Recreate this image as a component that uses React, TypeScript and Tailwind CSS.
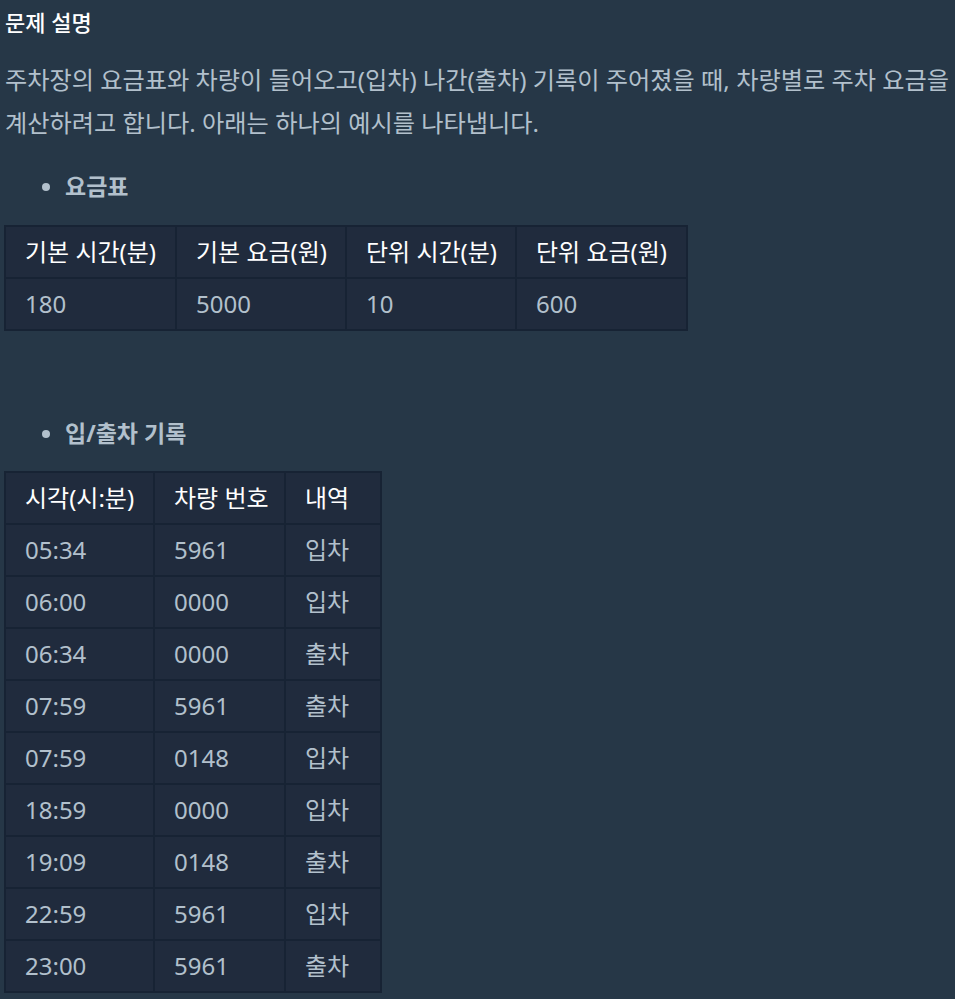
const feeHead = ['기본 시간(분)', '기본 요금(원)', '단위 시간(분)', '단위 요금(원)'];
const feeRow = ['180', '5000', '10', '600'];
const feeCols = ['w-[171px]', 'w-[170px]', 'w-[170px]', 'w-[171px]'];

const logHead = ['시각(시:분)', '차량 번호', '내역'];
const logCols = ['w-[149px]', 'w-[131px]', 'w-[96px]'];
const logRows = [
    ['05:34', '5961', '입차'],
    ['06:00', '0000', '입차'],
    ['06:34', '0000', '출차'],
    ['07:59', '5961', '출차'],
    ['07:59', '0148', '입차'],
    ['18:59', '0000', '입차'],
    ['19:09', '0148', '출차'],
    ['22:59', '5961', '입차'],
    ['23:00', '5961', '출차'],
];

const Table = ({
    head,
    rows,
    cols,
    width,
}: {
    head: string[];
    rows: string[][];
    cols: string[];
    width: string;
}) => {
    return (
        <table
            className={`ml-1 table-fixed border-collapse border-2 border-[#172334] bg-[#202b3d] text-[24px] ${width}`}
        >
            <thead>
                <tr>
                    {head.map((h, i) => (
                        <th
                            key={h}
                            className={`h-[52px] border-2 border-[#172334] px-[19px] py-0 text-left leading-[30px] font-normal whitespace-nowrap text-white ${cols[i]}`}
                        >
                            {h}
                        </th>
                    ))}
                </tr>
            </thead>
            <tbody>
                {rows.map((row, i) => (
                    <tr key={i}>
                        {row.map((c, j) => (
                            <td
                                key={j}
                                className="h-[52px] border-2 border-[#172334] px-[19px] py-0 leading-[30px] whitespace-nowrap text-[#b2c0cc]"
                            >
                                {c}
                            </td>
                        ))}
                    </tr>
                ))}
            </tbody>
        </table>
    );
};

const Bullet = ({ children }: { children: string }) => (
    <ul className="list-disc pl-[65px] text-[23px] leading-[32px] font-bold text-[#b2c0cc] marker:text-[#b2c0cc]">
        <li>{children}</li>
    </ul>
);

export default function App() {
    return (
        <div
            className="min-h-screen bg-[#263747] pb-2 text-[#b2c0cc]"
            style={{ fontFamily: '"Noto Sans", "Noto Sans CJK KR", sans-serif' }}
        >
            <h5 className="pl-[5px] text-[22px] leading-[44px] font-medium text-white">
                문제 설명
            </h5>
            <p className="mt-[14px] pl-[5px] text-[24.2px] leading-[43px]">
                주차장의 요금표와 차량이 들어오고(입차) 나간(출차) 기록이 주어졌을 때, 차량별로 주차 요금을
                계산하려고 합니다. 아래는 하나의 예시를 나타냅니다.
            </p>
            <div className="mt-[26px] mb-[23px]">
                <Bullet>요금표</Bullet>
            </div>
            <Table head={feeHead} rows={[feeRow]} cols={feeCols} width="w-[682px]" />
            <div className="mt-[86px] mb-[22px]">
                <Bullet>입/출차 기록</Bullet>
            </div>
            <Table head={logHead} rows={logRows} cols={logCols} width="w-[376px]" />
        </div>
    );
}
